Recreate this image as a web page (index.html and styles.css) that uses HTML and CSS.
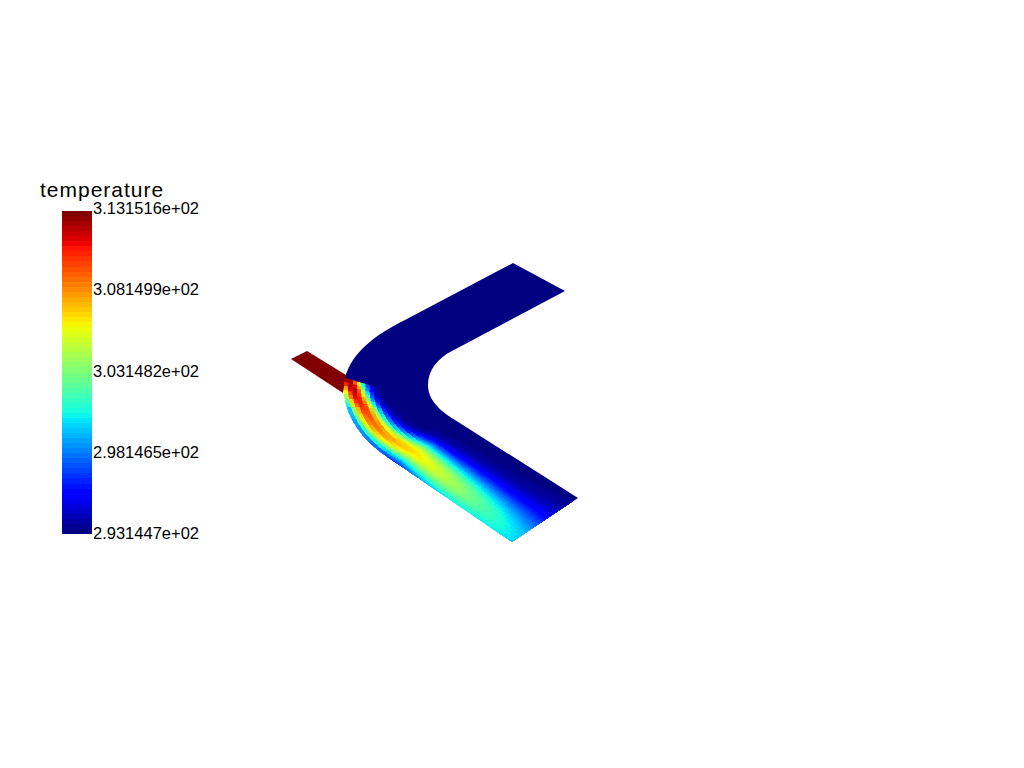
FILE: index.html
```html
<!DOCTYPE html>
<html lang="en">
<head>
<meta charset="UTF-8" />
<title>temperature</title>
<link rel="stylesheet" href="styles.css">
</head>
<body>
  <main class="viewport">
    <svg class="scene" id="scene" width="1024" height="768" viewBox="0 0 1024 768">
      <polygon class="inlet" points="291,359 307,351 346,375 343,393" />
      <path class="channel" d="M513,263 L565,291 L452,351 C438,358 428,370 428,385 C428,400 440,411 455,420 L578,498 L512,542 L386,456 C355,435 340,405 345,378 C352,352 375,335 405,320 Z" />
      <g id="mesh" class="mesh"></g>
    </svg>

    <aside class="scalar-bar">
      <div class="scalar-title">temperature</div>
      <div class="scalar-body">
        <div class="scalar-colors" id="colors"></div>
        <div class="scalar-labels">
          <span>3.131516e+02</span>
          <span>3.081499e+02</span>
          <span>3.031482e+02</span>
          <span>2.981465e+02</span>
          <span>2.931447e+02</span>
        </div>
      </div>
    </aside>
  </main>
  <script src="scene.js"></script>
</body>
</html>
```

FILE: styles.css
```css
* {
  box-sizing: border-box;
}
html, body {
  margin: 0;
  padding: 0;
  background: #fff;
}
.viewport {
  position: relative;
  width: 1024px;
  height: 768px;
  overflow: hidden;
}
.scene {
  position: absolute;
  left: 0;
  top: 0;
}
.inlet {
  fill: #800000;
}
.channel {
  fill: #000080;
}
.mesh {
  shape-rendering: crispEdges;
}
.scalar-bar {
  position: absolute;
  left: 40px;
  top: 179px;
  font-family: "Liberation Sans", Arial, sans-serif;
  color: #000;
}
.scalar-title {
  font-size: 21px;
  line-height: 22px;
  letter-spacing: 1px;
  white-space: nowrap;
}
.scalar-body {
  display: flex;
  margin: 10px 0 0 22px;
}
.scalar-colors {
  display: flex;
  flex-direction: column;
  width: 30px;
  height: 323px;
}
.scalar-colors div {
  flex: 1;
}
.scalar-labels {
  display: flex;
  flex-direction: column;
  justify-content: space-between;
  height: 339px;
  margin: -10px 0 0 1px;
  font-size: 16.5px;
  line-height: 14px;
}
```

FILE: scene.js
```js
(() => {
  'use strict';

  const LEVELS = 64;

  // Piecewise-linear jet channels: [position, value]
  const JET = {
    r: [[0, 0], [0.35, 0], [0.66, 1], [0.89, 1], [1, 0.5]],
    g: [[0, 0], [0.125, 0], [0.375, 1], [0.64, 1], [0.91, 0], [1, 0]],
    b: [[0, 0.5], [0.11, 1], [0.34, 1], [0.65, 0], [1, 0]]
  };

  function channel(table, q) {
    let i = 0;
    while (i < table.length - 2 && q > table[i + 1][0]) i++;
    const a = table[i], b = table[i + 1];
    return Math.round(255 * (a[1] + (b[1] - a[1]) * (q - a[0]) / (b[0] - a[0])));
  }

  // Jet colour table, quantized like the scalar bar
  function jet(v) {
    const q = Math.min(LEVELS - 1, Math.floor(Math.max(0, v) * LEVELS)) / (LEVELS - 1);
    return `rgb(${channel(JET.r, q)},${channel(JET.g, q)},${channel(JET.b, q)})`;
  }

  const colors = document.getElementById('colors');
  for (let i = LEVELS - 1; i >= 0; i--) {
    const band = document.createElement('div');
    band.style.background = jet((i + 0.5) / LEVELS);
    colors.appendChild(band);
  }

  function bezier(p, t) {
    const u = 1 - t;
    return [0, 1].map(k =>
      u * u * u * p[0][k] + 3 * u * u * t * p[1][k] + 3 * u * t * t * p[2][k] + t * t * t * p[3][k]);
  }
  const lerp = (a, b, t) => [a[0] + (b[0] - a[0]) * t, a[1] + (b[1] - a[1]) * t];

  const outerBend = [[345, 378], [340, 405], [355, 435], [386, 456]];
  const innerBend = [[428, 385], [428, 400], [440, 411], [455, 420]];
  const outerEnd = [512, 542];
  const innerEnd = [578, 498];

  // Plume profile along the channel: [d, peak, centre, width]
  const plume = [
    [0, 0.98, 0.03, 0.17],
    [0.05, 0.95, 0.1, 0.15],
    [0.15, 0.85, 0.18, 0.16],
    [0.3, 0.75, 0.22, 0.19],
    [0.45, 0.67, 0.28, 0.24],
    [0.85, 0.42, 0.15, 0.38],
    [1, 0.34, 0.05, 0.5]
  ];

  function field(s, d) {
    let i = 0;
    while (i < plume.length - 2 && d > plume[i + 1][0]) i++;
    const a = plume[i], b = plume[i + 1];
    const f = (d - a[0]) / (b[0] - a[0]);
    const peak = a[1] + (b[1] - a[1]) * f;
    const c = a[2] + (b[2] - a[2]) * f;
    const w = a[3] + (b[3] - a[3]) * f;
    return peak * Math.exp(-Math.pow((s - c) / w, 2));
  }

  const mesh = document.getElementById('mesh');
  const NS = 'http://www.w3.org/2000/svg';

  function addCells(a, b, cells) {
    for (let j = 0; j < cells; j++) {
      const s0 = j / cells, s1 = (j + 1) / cells;
      const v = field((s0 + s1) / 2, (a.d + b.d) / 2);
      if (v < 1 / LEVELS) continue;
      const pts = [lerp(a.o, a.n, s0), lerp(a.o, a.n, s1), lerp(b.o, b.n, s1), lerp(b.o, b.n, s0)];
      const cell = document.createElementNS(NS, 'polygon');
      const col = jet(v);
      cell.setAttribute('points', pts.map(p => p.join(',')).join(' '));
      cell.setAttribute('fill', col);
      cell.setAttribute('stroke', col);
      cell.setAttribute('stroke-width', '0.6');
      mesh.appendChild(cell);
    }
  }

  // Bend: coarse blocky cells. The inner wall starts further on so the
  // first sections lean the way the hot front does.
  const bendSteps = 20;
  let prev = null;
  for (let i = 0; i <= bendSteps; i++) {
    const t = i / bendSteps;
    const sec = { d: 0.4 * t, o: bezier(outerBend, t), n: bezier(innerBend, 0.55 + 0.45 * t) };
    if (prev) addCells(prev, sec, 22);
    prev = sec;
  }

  // Straight arm: fine cells so the bands read as smooth lines
  const armSteps = 40;
  for (let i = 1; i <= armSteps; i++) {
    const t = i / armSteps;
    const sec = { d: 0.4 + 0.6 * t, o: lerp(outerBend[3], outerEnd, t), n: lerp(innerBend[3], innerEnd, t) };
    addCells(prev, sec, 85);
    prev = sec;
  }
})();
```
